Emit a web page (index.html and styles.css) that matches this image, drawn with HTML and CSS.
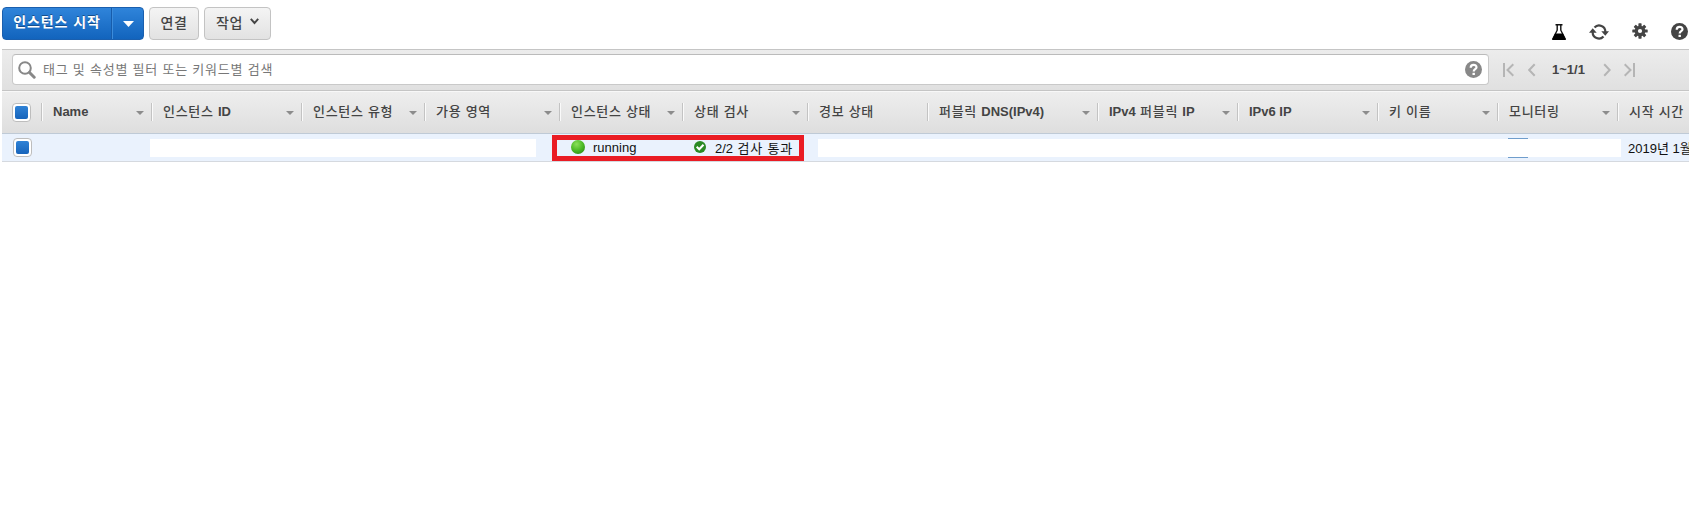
FILE: index.html
```html
<!DOCTYPE html>
<html lang="ko">
<head>
<meta charset="utf-8">
<title>인스턴스</title>
<link rel="stylesheet" href="styles.css">
</head>
<body>
<main class="console">
  <header class="toolbar">
    <div class="split">
      <button class="launch">인스턴스 시작</button>
      <button class="launch-more"><svg width="11" height="6"><path d="M0 0h11L5.500 6z" fill="#fff"/></svg></button>
    </div>
    <button class="btn connect">연결</button>
    <button class="btn actions">작업<svg width="9" height="7" viewBox="0 0 9 7"><path d="M.8 .8L4.500 5 8.200 .8" fill="none" stroke="#444" stroke-width="1.900"/></svg></button>
    <div class="tools">
      <svg width="16" height="18" viewBox="0 0 16 18"><path d="M4.500 1.700h7M6.200 1.700v5.500L2 15.500h12L9.800 7.200V1.700" fill="none" stroke="#111" stroke-width="1.400"/><path d="M4 10.500h8l3 6.500H1z" fill="#000"/></svg>
      <svg width="20" height="18" viewBox="0 0 20 18"><path d="M5.500 4.500A6.200 6.200 0 0 1 16.300 9M14.500 13.500A6.200 6.200 0 0 1 3.700 9" fill="none" stroke="#444" stroke-width="2.200"/><path d="M12.300 8.300h7.700l-3.700 4.500zM0 9.700h7.700L3.700 5.200z" fill="#444"/></svg>
      <svg class="gear" width="16" height="16" viewBox="-8 -8 16 16"><g fill="#444"><rect x="-1.600" y="-7.700" width="3.200" height="15.400" rx=".6"/><rect x="-7.700" y="-1.600" width="15.400" height="3.200" rx=".6"/><g transform="rotate(45)"><rect x="-1.600" y="-7.500" width="3.200" height="15" rx=".6"/><rect x="-7.500" y="-1.600" width="15" height="3.200" rx=".6"/></g><circle r="5.300"/></g><circle r="2.100" fill="#fff"/></svg>
      <svg width="17" height="17" viewBox="0 0 17 17"><circle cx="8.500" cy="8.500" r="8.500" fill="#444"/><path d="M5.700 6.700C5.700 3 11.500 3 11.500 6.300 11.500 8.300 8.700 8.200 8.700 10.500" fill="none" stroke="#fff" stroke-width="2.200"/><rect x="7.500" y="11.800" width="2.400" height="2.200" fill="#fff"/></svg>
    </div>
  </header>

  <section class="filter">
    <div class="search">
      <svg width="18" height="18" viewBox="0 0 18 18"><circle cx="7" cy="7" r="5.800" fill="none" stroke="#888" stroke-width="2"/><path d="M11.500 11.500l4.700 4.700" stroke="#888" stroke-width="3" stroke-linecap="round"/></svg>
      <span class="hint">태그 및 속성별 필터 또는 키워드별 검색</span>
      <svg width="17" height="17" viewBox="0 0 17 17"><circle cx="8.500" cy="8.500" r="8.500" fill="#888"/><path d="M5.700 6.700C5.700 3 11.500 3 11.500 6.300 11.500 8.300 8.700 8.200 8.700 10.500" fill="none" stroke="#fff" stroke-width="2.200"/><rect x="7.500" y="11.800" width="2.400" height="2.200" fill="#fff"/></svg>
    </div>
    <nav class="pager">
      <svg width="11" height="14" viewBox="0 0 11 14"><path d="M1 0v14M10.300 1.200L4.500 7l5.800 5.800"/></svg>
      <svg class="prev" width="8" height="14" viewBox="0 0 8 14"><path d="M6.700 1.200L1.200 7l5.500 5.800"/></svg>
      <span class="range">1~1/1</span>
      <svg class="next" width="8" height="14" viewBox="0 0 8 14"><path d="M1.200 1.200L6.700 7l-5.500 5.800"/></svg>
      <svg width="11" height="14" viewBox="0 0 11 14"><path d="M10 0v14M.7 1.200L6.500 7 .7 12.800"/></svg>
    </nav>
  </section>

  <section class="grid head">
    <div class="pick"><i class="check"></i></div>
    <div class="col sort"><b>Name</b></div>
    <div class="col sort">인스턴스 <b>ID</b></div>
    <div class="col sort">인스턴스 유형</div>
    <div class="col sort">가용 영역</div>
    <div class="col sort">인스턴스 상태</div>
    <div class="col sort">상태 검사</div>
    <div class="col">경보 상태</div>
    <div class="col sort">퍼블릭 <b>DNS(IPv4)</b></div>
    <div class="col sort"><b>IPv4</b> 퍼블릭 <b>IP</b></div>
    <div class="col sort"><b>IPv6 IP</b></div>
    <div class="col sort">키 이름</div>
    <div class="col sort">모니터링</div>
    <div class="col">시작 시간</div>
  </section>

  <section class="row">
    <div class="pick"><i class="check"></i></div>
    <div class="blank mask-id"></div>
    <div class="state"><svg width="14" height="14" viewBox="0 0 14 14"><defs><radialGradient id="g" cx=".4" cy=".3" r=".75"><stop offset="0" stop-color="#8ae05a"/><stop offset=".6" stop-color="#4cba26"/><stop offset="1" stop-color="#32931a"/></radialGradient></defs><circle cx="7" cy="7" r="7" fill="url(#g)"/></svg><span class="running">running</span></div>
    <div class="status"><svg width="12" height="12" viewBox="0 0 12 12"><circle cx="6" cy="6" r="6" fill="#2a8a24"/><path d="M2.700 5.800l2.500 2.500 4.300-4.600" fill="none" stroke="#fff" stroke-width="2"/></svg><span class="passed">2/2<span class="ko"> 검사 통과</span></span></div>
    <div class="blank mask-rest"><i class="link"></i></div>
    <div class="time">2019년 1월</div>
    <div class="highlight"></div>
  </section>
</main>
</body>
</html>
```
FILE: styles.css
```css
* { box-sizing: border-box; }
body { margin: 0; background: #fff; overflow: hidden; font: 13px "Liberation Sans", "Noto Sans CJK KR", sans-serif; color: #444; }
svg { display: block; flex: none; }
button { font: inherit; padding: 0; margin: 0; }
.console { width: 1687px; margin-left: 2px; }

.toolbar { height: 49px; padding-top: 7px; display: flex; align-items: flex-start; }
.split { display: flex; width: 142px; height: 33px; border: 1px solid #1a5fae; border-radius: 4px; overflow: hidden; background: linear-gradient(#2f84da, #1264bd); margin-right: 5px; }
.launch { width: 109px; border: 0; border-right: 1px solid #175cab; background: none; color: #fff; font-weight: 700; font-size: 14px; letter-spacing: .9px; line-height: 28px; padding-bottom: 3px; text-shadow: 0 -1px 0 #174f8d; white-space: nowrap; }
.launch-more { flex: 1; border: 0; border-left: 1px solid #3c8cdb; background: none; display: flex; align-items: center; justify-content: center; padding-top: 1px; }
.btn { height: 33px; border: 1px solid #c3c3c3; border-radius: 4px; background: linear-gradient(#f4f4f4, #e2e2e2); color: #444; font-size: 14px; font-weight: 500; letter-spacing: .7px; padding-bottom: 4px; display: flex; align-items: center; justify-content: center; white-space: nowrap; }
.connect { width: 50px; margin-right: 5px; }
.actions { width: 67px; gap: 7px; }
.tools { margin-left: auto; margin-right: 1px; display: flex; align-items: center; padding-top: 16px; }
.tools svg:nth-child(2) { margin-left: 22px; }
.tools svg:nth-child(3) { margin-left: 23px; margin-bottom: 2px; }
.tools svg:nth-child(4) { margin-left: 23px; margin-bottom: 1px; }

.filter { height: 42px; border-top: 1px solid #c5c5c5; border-bottom: 1px solid #c5c5c5; background: linear-gradient(#ececec, #e0e0e0); display: flex; padding: 4px 0 0 10px; }
.search { width: 1477px; height: 31px; background: #fff; border: 1px solid #c9c9c9; border-top-color: #bbb; border-radius: 4px; display: flex; align-items: center; padding: 0 6px 0 5px; }
.hint { flex: 1; margin-left: 7px; padding-bottom: 3px; color: #777; letter-spacing: .78px; white-space: nowrap; }
.pager { height: 31px; display: flex; align-items: center; margin-left: 14px; }
.pager path { fill: none; stroke: #b5b5b5; stroke-width: 2; }
.prev { margin-left: 14px; }
.range { margin-left: 16px; width: 35px; font-weight: 700; }
.next { margin: 0 13px 0 16px; }

.head { display: grid; height: 43px; grid-template-columns: 39px 110px 150px 123px 135px 123px 125px 120px 170px 140px 140px 120px 120px 72px; background: linear-gradient(#eee, #dedede); border-top: 1px solid #f8f8f8; border-bottom: 1px solid #bfcad6; }
.pick { display: flex; align-items: center; padding-left: 10px; }
.check { width: 19px; height: 19px; padding: 2px; border: 1px solid #bdbdbd; border-radius: 4px; background: #fff; }
.check::before { content: ""; display: block; height: 13px; border-radius: 2px; background: linear-gradient(#2f82d6, #1764bb); }
.col { display: flex; align-items: center; height: 18px; margin-top: 11px; padding-left: 11px; border-left: 1px solid #c3c3c3; box-shadow: inset 1px 0 #fafafa; font-weight: 500; letter-spacing: .7px; white-space: pre; line-height: 16px; padding-bottom: 1px; }
.col b { font-weight: 700; letter-spacing: 0; }
.sort::after { content: ""; margin: 2px 7px 0 auto; border: 4px solid transparent; border-top-color: #8c8c8c; border-bottom: 0; }

.row { position: relative; height: 28px; display: flex; align-items: center; background: #eaf2fd; border-bottom: 1px solid #d5d9df; color: #111; }
.row .pick { width: 148px; padding-left: 11px; }
.blank { background: #fff; height: 18px; }
.mask-id { width: 386px; }
.state, .status { display: flex; align-items: center; white-space: nowrap; padding-bottom: 1px; }
.state { width: 123px; margin-left: 35px; }
.running { margin-left: 8px; }
.status { width: 124px; }
.passed { margin-left: 9px; }
.ko { letter-spacing: .8px; }
.mask-rest { width: 803px; padding-left: 690px; height: 20px; background: linear-gradient(#fff, #fff) center / 100% 18px no-repeat; }
.link { display: block; width: 20px; height: 20px; border: solid #6f9dcc; border-width: 1px 0; }
.time { flex: 1; min-width: 0; margin-left: 7px; padding-bottom: 1px; overflow: hidden; white-space: nowrap; }
.highlight { position: absolute; left: 550px; top: 1px; width: 252px; height: 26px; border: 5px solid #ea1c24; }
```
